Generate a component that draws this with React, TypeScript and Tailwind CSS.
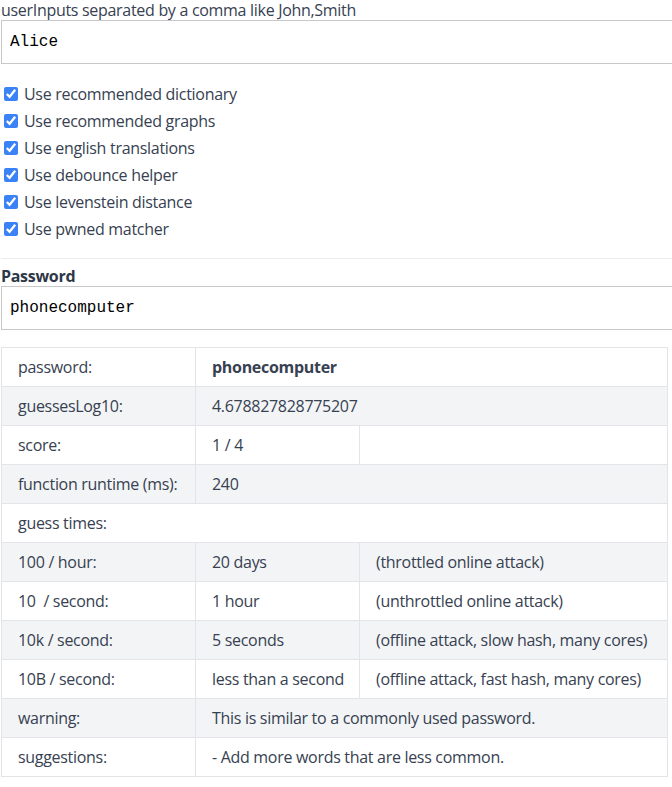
import { useState } from 'react'

const options = [
  'Use recommended dictionary',
  'Use recommended graphs',
  'Use english translations',
  'Use debounce helper',
  'Use levenstein distance',
  'Use pwned matcher',
]

type Row = {
  label: string
  cells: { text: string; span?: number; bold?: boolean }[]
}

const rows: Row[] = [
  { label: 'password:', cells: [{ text: 'phonecomputer', span: 2, bold: true }] },
  { label: 'guessesLog10:', cells: [{ text: '4.678827828775207', span: 2 }] },
  { label: 'score:', cells: [{ text: '1 / 4' }, { text: '' }] },
  { label: 'function runtime (ms):', cells: [{ text: '240', span: 2 }] },
  { label: 'guess times:', cells: [] },
  { label: '100 / hour:', cells: [{ text: '20 days' }, { text: '(throttled online attack)' }] },
  { label: '10\u00a0 / second:', cells: [{ text: '1 hour' }, { text: '(unthrottled online attack)' }] },
  { label: '10k / second:', cells: [{ text: '5 seconds' }, { text: '(offline attack, slow hash, many cores)' }] },
  { label: '10B / second:', cells: [{ text: 'less than a second' }, { text: '(offline attack, fast hash, many cores)' }] },
  { label: 'warning:', cells: [{ text: 'This is similar to a commonly used password.', span: 2 }] },
  { label: 'suggestions:', cells: [{ text: '- Add more words that are less common.', span: 2 }] },
]

export default function App() {
  const [userInputs, setUserInputs] = useState('Alice')
  const [password, setPassword] = useState('phonecomputer')
  const [checked, setChecked] = useState(options.map(() => true))

  return (
    <div className="min-h-screen overflow-hidden bg-white pl-[1px] font-['Open_Sans',sans-serif] text-base tracking-[-0.3px] text-[#374151]">
      <label className="block leading-5">userInputs separated by a comma like John,Smith</label>
      <input
        type="text"
        value={userInputs}
        onChange={(e) => setUserInputs(e.target.value)}
        className="block h-[44px] w-[calc(100%+8px)] border border-[#c8c8c8] px-2 font-['Liberation_Mono',monospace] text-base tracking-normal text-black outline-none"
      />

      {/* Opciones */}
      <div className="mt-4 flex flex-col">
        {options.map((opt, i) => (
          <label key={opt} className="flex h-[27px] items-center">
            <input
              type="checkbox"
              checked={checked[i]}
              onChange={() => setChecked(checked.map((c, j) => (j === i ? !c : c)))}
              className="ml-[3px] mr-[6px] h-[14px] w-[14px] accent-[#3b82f6]"
            />
            <span>{opt}</span>
          </label>
        ))}
      </div>

      <hr className="mt-4 border-[#ececec]" />

      <label className="mt-[7px] block font-bold leading-5 text-[#2d3748]">Password</label>
      <input
        type="text"
        value={password}
        onChange={(e) => setPassword(e.target.value)}
        className="block h-[44px] w-[calc(100%+8px)] border border-[#c8c8c8] px-2 font-['Liberation_Mono',monospace] text-base tracking-normal text-black outline-none"
      />

      <table className="mt-[17px] w-[667px] table-fixed border-collapse">
        <colgroup>
          <col className="w-[194px]" />
          <col className="w-[164px]" />
          <col />
        </colgroup>
        <tbody>
          {rows.map((row, i) => (
            <tr key={row.label} className={i % 2 === 1 ? 'bg-[#f3f4f6]' : 'bg-white'}>
              <td
                colSpan={row.cells.length === 0 ? 3 : 1}
                className="whitespace-nowrap border border-[#e2e4e8] px-4 py-[7px] leading-6"
              >
                {row.label}
              </td>
              {row.cells.map((cell, j) => (
                <td
                  key={j}
                  colSpan={cell.span ?? 1}
                  className={`whitespace-nowrap border border-[#e2e4e8] px-4 py-[7px] leading-6 ${cell.bold ? 'font-bold' : ''}`}
                >
                  {cell.text}
                </td>
              ))}
            </tr>
          ))}
        </tbody>
      </table>
    </div>
  )
}
